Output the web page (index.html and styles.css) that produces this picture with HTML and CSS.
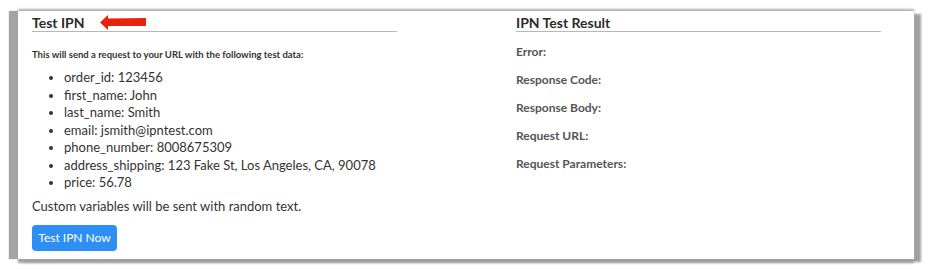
FILE: index.html
```html
<!DOCTYPE html>
<html lang="en">

<head>
    <meta charset="UTF-8">
    <title>Test IPN</title>
    <link rel="stylesheet" href="styles.css">
</head>

<body>

    <div class="ipn-card">
        <div class="ipn-col">
            <h3 class="ipn-title">Test IPN
                <svg class="seta" width="46" height="15" viewBox="0 0 46 15">
                    <polygon points="0,7.5 8,0 8,3.5 46,3 46,11 8,11 8,15" fill="#e8220c" />
                </svg>
            </h3>

            <p class="intro">This will send a request to your URL with the following test data:</p>

            <ul class="dados">
                <li>order_id: 123456</li>
                <li>first_name: John</li>
                <li>last_name: Smith</li>
                <li>email: jsmith@ipntest.com</li>
                <li>phone_number: 8008675309</li>
                <li>address_shipping: 123 Fake St, Los Angeles, CA, 90078</li>
                <li>price: 56.78</li>
            </ul>

            <p class="custom">Custom variables will be sent with random text.</p>

            <button class="btn-testar">Test IPN Now</button>
        </div>

        <div class="ipn-col">
            <h3 class="ipn-title">IPN Test Result</h3>

            <div class="resultado">
                <p>Error:</p>
                <p>Response Code:</p>
                <p>Response Body:</p>
                <p>Request URL:</p>
                <p>Request Parameters:</p>
            </div>
        </div>
    </div>

</body>

</html>
```

FILE: styles.css
```css
body {
    background-color: #ffffff;
    font-family: Lato, "Open Sans", sans-serif;
    margin: 0;
    padding: 11px 16px 10px 18px;
    color: #333333;
}

.ipn-card {
    background-color: #ffffff;
    height: 248px;
    box-sizing: border-box;
    padding: 0 0 0 14px;
    display: grid;
    grid-template-columns: 365px 365px;
    column-gap: 119px;
    box-shadow: -9px 0 1px #a3a3a3, 7px 3px 2px #a0a0a0, 0 4px 2px #a0a0a0, 0 -2px 2px #b0b0b0;
}

.ipn-title {
    font-size: 14px;
    font-weight: bold;
    margin: 0;
    padding-top: 2px;
    border-bottom: 1px solid #b8b8b8;
    display: flex;
    align-items: center;
    height: 18px;
    color: #2c2c2c;
}

.seta {
    margin-left: 15px;
}

.intro {
    font-size: 9.5px;
    font-weight: bold;
    margin: 17px 0 0 0;
    color: #333333;
}

.dados {
    margin: 9px 0 0 0;
    padding-left: 32px;
    font-size: 13px;
    line-height: 17.5px;
}

.custom {
    font-size: 13px;
    margin: 6px 0 0 0;
}

.btn-testar {
    margin-top: 11px;
    background-color: #2d8ff4;
    color: #ffffff;
    border: none;
    border-radius: 4px;
    font-family: Lato, "Open Sans", sans-serif;
    font-size: 12px;
    width: 85px;
    height: 26px;
    padding: 0;
}

.resultado {
    margin-top: 12px;
}

.resultado p {
    font-size: 12px;
    font-weight: bold;
    color: #555555;
    margin: 0 0 13px 0;
    height: 15px;
}
```
